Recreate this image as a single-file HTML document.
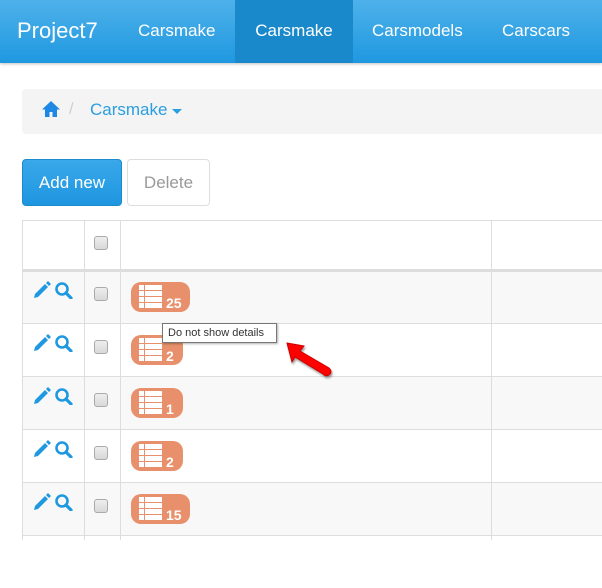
<!DOCTYPE html>
<html><head><style>
*{margin:0;padding:0;box-sizing:border-box}
body{width:602px;height:540px;overflow:hidden;background:#fff;font-family:"Liberation Sans",Arial,sans-serif;position:relative}
.nav{position:absolute;left:0;top:0;width:602px;height:63px;background:linear-gradient(#4eb1ea,#1f98e0);box-shadow:0 1px 3px rgba(0,0,0,.25)}
.nav span{position:absolute;top:0;height:63px;line-height:62px;color:#fff;font-size:17px}
.act{background:#1a89cb}
.bc{position:absolute;left:22px;top:89px;width:600px;height:45px;background:#f4f4f4;border-radius:4px}
.btn{position:absolute;top:159px;height:47px;line-height:46px;font-size:17px;border-radius:4px;text-align:center}
.row{position:absolute;left:22px;width:600px;height:53px;border-top:1px solid #ddd}
.v{position:absolute;top:220px;height:320px;width:1px;background:#ddd}
.cb{position:absolute;left:94px;width:14px;height:14px;border:1px solid #aaa;border-radius:3px;background:linear-gradient(#eee,#d8d8d8)}
.badge{position:absolute;left:131px;height:30px;background:#e8906b;border-radius:10px;color:#fff;font-weight:bold;font-size:14px}
.badge b{position:absolute;left:35px;top:13px}
</style></head><body>
<div class="nav">
<span style="left:17px;font-size:22px">Project7</span>
<span style="left:138px">Carsmake</span>
<span class="act" style="left:235px;width:118px;text-align:center">Carsmake</span>
<span style="left:372px">Carsmodels</span>
<span style="left:502px">Carscars</span>
</div>
<div class="bc">
<svg style="position:absolute;left:19px;top:11px" width="20" height="18" viewBox="0 0 20 18"><path d="M10 1 L1 9.5 H4 V17 H8.5 V12 H11.5 V17 H16 V9.5 H19 Z" fill="#1e88e5"/></svg>
<span style="position:absolute;left:47px;top:12px;color:#ccc;font-size:16px">/</span>
<span style="position:absolute;left:68px;top:11px;color:#2a9ee0;font-size:17px">Carsmake</span>
<svg style="position:absolute;left:150px;top:20px" width="10" height="6"><path d="M0 0H10L5 5Z" fill="#2a9ee0"/></svg>
</div>
<div class="btn" style="left:22px;width:100px;background:linear-gradient(#3aa8ea,#1e96e0);color:#fff;border:1px solid #1b8bd0">Add new</div>
<div class="btn" style="left:127px;width:83px;background:#fff;color:#999;border:1px solid #ddd">Delete</div>
<div class="row" style="top:220px;height:51px;border-bottom:2px solid #ddd"></div>
<div class="row" style="top:271px;background:#f8f8f8"></div>
<div class="row" style="top:323px"></div>
<div class="row" style="top:376px;background:#f8f8f8"></div>
<div class="row" style="top:429px"></div>
<div class="row" style="top:482px;background:#f8f8f8"></div>
<div class="row" style="top:535px"></div>
<div class="v" style="left:22px"></div><div class="v" style="left:84px"></div><div class="v" style="left:120px"></div><div class="v" style="left:491px"></div>
<div class="cb" style="top:236px"></div>
<div id="rows"></div>
<script>
var d=[['25',59],['2',52],['1',52],['2',52],['15',59]],h='';
d.forEach(function(r,i){var t=271+i*53.2|0;
h+='<svg style="position:absolute;left:33px;top:'+(t+10)+'px" width="42" height="18" viewBox="0 0 42 18"><path d="M1 17 L2 13 L12 3 L15 6 L5 16 Z M13 2 L15 0 L18 3 L16 5Z" fill="#1e98e0"/><circle cx="29" cy="8" r="5.5" fill="none" stroke="#1e98e0" stroke-width="2.6"/><path d="M33 12 L38 17" stroke="#1e98e0" stroke-width="3.2" stroke-linecap="round"/></svg>';
h+='<div class="cb" style="top:'+(t+16)+'px"></div>';
h+='<div class="badge" style="top:'+(t+11)+'px;width:'+r[1]+'px"><svg style="position:absolute;left:8px;top:3px" width="24" height="24"><g fill="#fff"><rect x="0" y="0" width="5" height="5"/><rect x="6" y="0" width="17" height="5"/><rect x="0" y="6" width="5" height="5"/><rect x="6" y="6" width="17" height="5"/><rect x="0" y="12" width="5" height="5"/><rect x="6" y="12" width="17" height="5"/><rect x="0" y="18" width="5" height="5"/><rect x="6" y="18" width="17" height="5"/></g></svg><b>'+r[0]+'</b></div>';});
document.getElementById('rows').innerHTML=h;
</script>
<div style="position:absolute;left:162px;top:323px;width:115px;height:20px;background:#fff;border:1px solid #777;box-shadow:1px 1px 2px rgba(0,0,0,.3);font-size:11px;line-height:18px;padding-left:5px;color:#333">Do not show details</div>
<svg style="position:absolute;left:284px;top:340px" width="52" height="40" viewBox="0 0 52 40"><path d="M3 3 L20 6 L16 11 L45 28 Q49 32 45 35 Q42 37 39 34 L11 17 L8 22 Z" fill="#f00" stroke="#c00" stroke-width="1" filter="drop-shadow(1px 2px 1px rgba(0,0,0,.4))"/></svg>
</body></html>
